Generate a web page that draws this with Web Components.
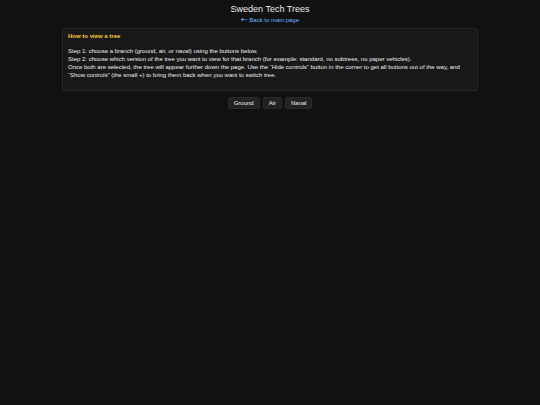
<!DOCTYPE html>
<html lang="en">
<head>
<meta charset="UTF-8">
<meta name="viewport" content="width=device-width, initial-scale=1">
<title>Sweden Tech Trees</title>
<style>
  body {
    margin: 0;
    padding: 3px 8px;
    background: #111;
    color: #eee;
    font-family: "Liberation Sans", Arial, sans-serif;
    font-size: 6px;
    line-height: 8px;
  }
</style>
</head>
<body>
<tree-header href="#main" link-text="Back to main page">Sweden Tech Trees</tree-header>

<help-box>
  <span slot="title">How to view a tree</span>
  Step 1: choose a branch (ground, air, or naval) using the buttons below.<br>
  Step 2: choose which version of the tree you want to view for that branch (for example: standard, no subtrees, no paper vehicles).<br>
  Once both are selected, the tree will appear further down the page. Use the “Hide controls” button in the corner to get all buttons out of the way, and “Show controls” (the small +) to bring them back when you want to switch tree.
</help-box>

<branch-bar>
  <branch-button>Ground</branch-button>
  <branch-button>Air</branch-button>
  <branch-button>Naval</branch-button>
</branch-bar>

<script>
class TreeHeader extends HTMLElement {
  constructor() {
    super();
    this.attachShadow({ mode: "open" });

    this.shadowRoot.innerHTML = `
      <style>
        :host {
          display: flex;
          flex-direction: column;
          align-items: center;
        }
        h1 {
          margin: 0;
          font-size: 9px;
          font-weight: normal;
          line-height: 12px;
        }
        a {
          color: #6bb6ff;
          line-height: 10px;
          text-decoration: none;
        }
        a:hover {
          text-decoration: underline;
        }
        .arrow {
          font-family: "DejaVu Sans", sans-serif;
          font-size: 8px;
        }
      </style>

      <h1><slot></slot></h1>
      <a id="link"><span class="arrow">←</span> <span id="text"></span></a>
    `;
  }

  connectedCallback() {
    this.shadowRoot.getElementById("link").href = this.getAttribute("href");
    this.shadowRoot.getElementById("text").textContent = this.getAttribute("link-text");
  }
}

class HelpBox extends HTMLElement {
  constructor() {
    super();
    this.attachShadow({ mode: "open" });

    this.shadowRoot.innerHTML = `
      <style>
        :host {
          display: block;
          box-sizing: border-box;
          max-width: 416px;
          margin: 3px auto 6px;
          padding: 3px 5px 11px;
          background: #181818;
          border: 1px solid #262626;
          border-radius: 2px;
        }
        h2 {
          margin: 0 0 7px;
          color: #ffcc33;
          font-size: inherit;
        }
        p {
          margin: 0;
        }
      </style>

      <h2><slot name="title"></slot></h2>
      <p><slot></slot></p>
    `;
  }
}

class BranchBar extends HTMLElement {
  constructor() {
    super();
    this.attachShadow({ mode: "open" });

    this.shadowRoot.innerHTML = `
      <style>
        :host {
          display: flex;
          flex-wrap: wrap;
          justify-content: center;
          gap: 3px;
        }
      </style>

      <slot></slot>
    `;
  }
}

class BranchButton extends HTMLElement {
  constructor() {
    super();
    this.attachShadow({ mode: "open" });

    this.shadowRoot.innerHTML = `
      <style>
        :host {
          display: block;
        }
        button {
          display: block;
          margin: 0;
          padding: 1px 5px;
          background: #222;
          border: 1px solid #2a2a2a;
          border-radius: 2px;
          color: inherit;
          font: inherit;
          line-height: 8px;
          cursor: pointer;
        }
        button:hover {
          background: #333;
        }
      </style>

      <button type="button"><slot></slot></button>
    `;
  }
}

customElements.define("tree-header", TreeHeader);
customElements.define("help-box", HelpBox);
customElements.define("branch-bar", BranchBar);
customElements.define("branch-button", BranchButton);
</script>
</body>
</html>
